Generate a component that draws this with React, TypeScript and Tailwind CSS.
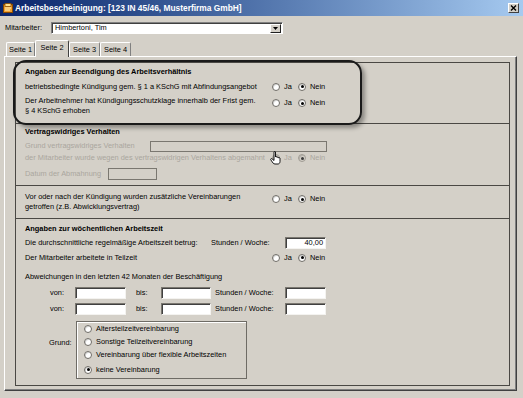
import React from "react";

function Circle({ checked, disabled }: { checked?: boolean; disabled?: boolean }) {
  return (
    <span
      className={`flex h-[8px] w-[8px] shrink-0 items-center justify-center rounded-full border ${
        disabled ? "border-[#a09c94] bg-[#d4d0c8]" : "border-[#6f6c66] bg-white"
      } shadow-[inset_1px_1px_0_rgba(0,0,0,0.15)]`}
    >
      {checked ? (
        <span className={`h-[3px] w-[3px] rounded-full ${disabled ? "bg-[#3c3c3c]" : "bg-black"}`} />
      ) : null}
    </span>
  );
}

function Radio({
  label,
  checked,
  disabled,
  w,
}: {
  label: string;
  checked?: boolean;
  disabled?: boolean;
  w?: string;
}) {
  return (
    <div className={`flex items-center whitespace-nowrap ${w ?? ""}`}>
      <Circle checked={checked} disabled={disabled} />
      <span className={`ml-[4px] ${disabled ? "text-[#aaa69e]" : ""}`}>{label}</span>
    </div>
  );
}

function JaNein({ disabled, className }: { disabled?: boolean; className?: string }) {
  return (
    <div className={`flex h-[10px] items-center ${className ?? ""}`}>
      <Radio label="Ja" w="w-[26px]" disabled={disabled} />
      <Radio label="Nein" checked disabled={disabled} />
    </div>
  );
}

function DisabledBox({ w, h }: { w: string; h: string }) {
  return <div className={`${w} ${h} shrink-0 border border-[#7a7770] bg-[#d4d0c8]`} />;
}

function Box({ w, children }: { w: string; children?: React.ReactNode }) {
  return (
    <div
      className={`${w} flex h-[12px] shrink-0 items-center justify-end border border-t-[#7a7770] border-l-[#7a7770] border-b-[#f4f3f0] border-r-[#f4f3f0] bg-white pr-[2px] shadow-[inset_1px_1px_0_#404040]`}
    >
      {children}
    </div>
  );
}

function Tab({ label, selected, w }: { label: string; selected?: boolean; w: string }) {
  if (selected) {
    return (
      <div
        className={`${w} relative z-10 -mb-[1px] flex h-[17px] items-center justify-center rounded-t-[2px] border-l border-t border-r border-l-white border-t-white border-r-[#404040] bg-[#d4d0c8] pb-[2px]`}
      >
        {label}
      </div>
    );
  }
  return (
    <div
      className={`${w} flex h-[14px] items-center justify-center rounded-t-[2px] border-l border-t border-r border-l-white border-t-white border-r-[#808080] bg-[#d4d0c8]`}
    >
      {label}
    </div>
  );
}

export default function App() {
  return (
    <div className="relative h-[398px] w-[523px] overflow-hidden bg-[#d4d0c8] font-['Liberation_Sans',Arial,sans-serif] text-[7.4px] leading-[10px] text-black">
      {/* Title bar */}
      <div className="flex h-[16px] items-center bg-linear-to-r from-[#0a246a] to-[#a6caf0] pl-[3px] pr-[4px]">
        <svg width="10" height="10" viewBox="0 0 10 10" className="shrink-0">
          <rect x="0.5" y="1.5" width="9" height="8" fill="#f0a030" stroke="#8a4a00" strokeWidth="1" />
          <rect x="2" y="0.5" width="6" height="3" fill="#ffe08a" stroke="#8a4a00" strokeWidth="0.8" />
          <rect x="2" y="4.5" width="6" height="1" fill="#fff3c0" />
          <rect x="2" y="6.5" width="5" height="1" fill="#fff3c0" />
        </svg>
        <span className="ml-[2px] whitespace-nowrap text-[8.4px] font-bold text-white">
          Arbeitsbescheinigung: [123 IN 45/46, Musterfirma GmbH]
        </span>
        <div className="ml-auto flex h-[10px] w-[11px] items-center justify-center border border-t-white border-l-white border-r-[#404040] border-b-[#404040] bg-[#d4d0c8]">
          <svg width="7" height="6" viewBox="0 0 7 6">
            <path d="M1 0.5 L6 5.5 M6 0.5 L1 5.5" stroke="#000" strokeWidth="1.4" />
          </svg>
        </div>
      </div>

      {/* Body */}
      <div className="pl-[4px] pr-[6px] pt-[6px]">
        {/* Mitarbeiter */}
        <div className="flex h-[12px] items-center pl-[1px]">
          <span className="w-[46px]">Mitarbeiter:</span>
          <div className="flex h-[12px] w-[232px] items-center border border-t-[#808080] border-l-[#808080] border-b-white border-r-white bg-white shadow-[inset_1px_1px_0_#404040]">
            <span className="ml-[3px] flex-1">Himbertoni, Tim</span>
            <div className="mr-[1px] flex h-[9px] w-[11px] items-center justify-center border border-t-white border-l-white border-r-[#202020] border-b-[#202020] bg-[#d4d0c8]">
              <svg width="5" height="3" viewBox="0 0 5 3">
                <path d="M0 0 H5 L2.5 3 Z" fill="#000" />
              </svg>
            </div>
          </div>
        </div>

        {/* Tabs */}
        <div className="mt-[6px] flex h-[16px] items-end pl-[2px]">
          <Tab label="Seite 1" w="w-[29px]" />
          <Tab label="Seite 2" w="w-[34px]" selected />
          <Tab label="Seite 3" w="w-[31px]" />
          <Tab label="Seite 4" w="w-[31px]" />
        </div>

        {/* Tab panel */}
        <div className="h-[335px] w-[513px] border border-t-white border-l-white border-r-[#404040] border-b-[#404040] pl-[10px] pr-[6px] pt-[5px] shadow-[inset_-1px_-1px_0_#808080]">
          <div className="flex h-[324px] w-[495px] flex-col border border-[#4a4844]">
            {/* Section 1 */}
            <div className="h-[61px] shrink-0 border-b border-[#4a4844] pl-[9px] pt-[3px]">
              <div className="flex h-[11px] items-center font-bold">
                Angaben zur Beendigung des Arbeitsverhältnis
              </div>
              <div className="mt-[4px] flex h-[11px] items-center">
                <span className="w-[247px] whitespace-nowrap">
                  betriebsbedingte Kündigung gem. § 1 a KSchG mit Abfindungsangebot
                </span>
                <JaNein />
              </div>
              <div className="mt-[4px] flex items-start">
                <span className="w-[247px]">
                  Der Arbeitnehmer hat Kündigungsschutzklage innerhalb der Frist gem.
                  <br />§ 4 KSchG erhoben
                </span>
                <JaNein className="mt-[2px]" />
              </div>
            </div>

            {/* Section 2 */}
            <div className="h-[62px] shrink-0 border-b border-[#4a4844] pl-[9px] pt-[2px]">
              <div className="flex h-[11px] items-center font-bold">Vertragswidriges Verhalten</div>
              <div className="mt-[3px] flex h-[12px] items-center">
                <span className="w-[125px] whitespace-nowrap text-[#aaa69e]">Grund vertragswidriges Verhalten</span>
                <DisabledBox w="w-[177px]" h="h-[11px]" />
              </div>
              <div className="flex h-[12px] items-center">
                <span className="w-[247px] whitespace-nowrap text-[#aaa69e]">
                  der Mitarbeiter wurde wegen des vertragswidrigen Verhaltens abgemahnt
                </span>
                <JaNein disabled />
              </div>
              <div className="mt-[4px] flex h-[12px] items-center">
                <span className="w-[83px] whitespace-nowrap text-[#aaa69e]">Datum der Abmahnung</span>
                <DisabledBox w="w-[49px]" h="h-[12px]" />
              </div>
            </div>

            {/* Section 3 */}
            <div className="flex h-[33px] shrink-0 items-start border-b border-[#4a4844] pl-[9px] pt-[6px]">
              <span className="w-[247px]">
                Vor oder nach der Kündigung wurden zusätzliche Vereinbarungen
                <br />
                getroffen (z.B. Abwicklungsvertrag)
              </span>
              <JaNein className="mt-[2px]" />
            </div>

            {/* Section 4 */}
            <div className="flex-1 pl-[9px] pt-[4px]">
              <div className="flex h-[11px] items-center font-bold">Angaben zur wöchentlichen Arbeitszeit</div>
              <div className="mt-[3px] flex h-[12px] items-center">
                <span className="w-[186px] whitespace-nowrap">Die durchschnittliche regelmäßige Arbeitszeit betrug:</span>
                <span className="w-[74px] whitespace-nowrap">Stunden / Woche:</span>
                <Box w="w-[41px]">40,00</Box>
              </div>
              <div className="mt-[3px] flex h-[11px] items-center">
                <span className="w-[247px] whitespace-nowrap">Der Mitarbeiter arbeitete in Teilzeit</span>
                <JaNein />
              </div>
              <div className="mt-[8px] flex h-[11px] items-center whitespace-nowrap">
                Abweichungen in den letzten 42 Monaten der Beschäftigung
              </div>
              {[0, 1].map((i) => (
                <div
                  key={i}
                  className={`${i === 0 ? "mt-[5px]" : "mt-[4px]"} flex h-[12px] items-center pl-[25px]`}
                >
                  <span className="w-[25px]">von:</span>
                  <Box w="w-[51px]" />
                  <span className="w-[35px] pl-[10px]">bis:</span>
                  <Box w="w-[50px]" />
                  <span className="w-[74px] whitespace-nowrap pl-[4px]">Stunden / Woche:</span>
                  <Box w="w-[41px]" />
                </div>
              ))}
              <div className="mt-[6px] flex items-start pl-[24px]">
                <span className="mt-[17px] w-[27px]">Grund:</span>
                <div className="h-[58px] w-[171px] border border-[#6e6b65] pl-[7px] pt-[0px] shadow-[inset_1px_1px_0_#ffffff]">
                  <div className="flex h-[13px] items-center">
                    <Radio label="Altersteilzeitvereinbarung" />
                  </div>
                  <div className="flex h-[13px] items-center">
                    <Radio label="Sonstige Teilzeitvereinbarung" />
                  </div>
                  <div className="flex h-[13px] items-center">
                    <Radio label="Vereinbarung über flexible Arbeitszeiten" />
                  </div>
                  <div className="mt-[2px] flex h-[13px] items-center">
                    <Radio label="keine Vereinbarung" checked />
                  </div>
                </div>
              </div>
            </div>
          </div>
        </div>
      </div>

      {/* Highlight annotation over section 1 */}
      <div className="pointer-events-none absolute left-[13px] top-[60px] h-[65px] w-[349px] rounded-[13px] border-2 border-[#1a1a1a] shadow-[3px_3px_4px_rgba(0,0,0,0.35)]" />

      {/* Hand cursor */}
      <svg className="absolute left-[270px] top-[151px]" width="11" height="14" viewBox="0 0 11 14">
        <path
          d="M4 1 C4 0.3 5.5 0.3 5.5 1 V6 C5.5 5.4 7 5.4 7 6 V6.5 C7 6 8.5 6 8.5 6.7 V7 C8.5 6.5 10 6.5 10 7.2 V10.5 C10 12 9 13 8 13 H5 C4 13 3.5 12.5 3 12 L0.8 8.8 C0.3 8 1.3 7.2 2 7.8 L4 9.5 Z"
          fill="#fff"
          stroke="#000"
          strokeWidth="0.9"
        />
      </svg>
    </div>
  );
}
